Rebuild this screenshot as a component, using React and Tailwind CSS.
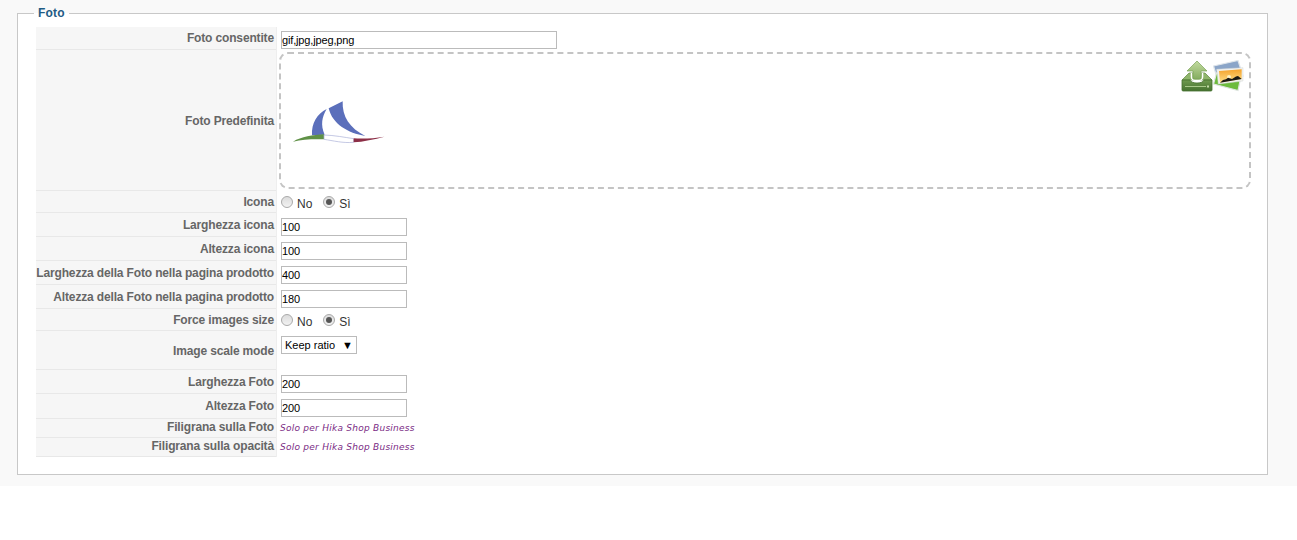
import React from "react";

const labelBase = "w-[240px] shrink-0 bg-[#f6f6f6] border-b border-[#e8e8e8] text-right pr-[2px] font-bold text-[12px] leading-[14px] tracking-[-0.15px] whitespace-nowrap text-[#666666]";

function Row({ label, h, children, center, pt = "pt-[5px]", fieldPt = "" }) {
  return (
    <div className="flex" style={{ height: h }}>
      <div className={`${labelBase} ${center ? "flex items-center justify-end pt-[2px]" : pt}`}>{label}</div>
      <div className={`flex-1 min-w-0 border-l border-[#eeeeee] ${fieldPt}`}>{children}</div>
    </div>
  );
}

function TextBox({ value, wide }) {
  return (
    <input
      readOnly
      value={value}
      className={`ml-[4px] block h-[18px] ${wide ? "w-[276px]" : "w-[126px]"} border border-[#bbbbbb] bg-white text-[11px] leading-[14px] tracking-[-0.15px] text-black outline-none`}
    />
  );
}

function Radio({ checked }) {
  return (
    <span className="flex h-[12px] w-[12px] items-center justify-center rounded-full border border-[#a9a9a9] bg-gradient-to-b from-[#dcdcdc] to-[#f2f2f2]">
      {checked && <span className="h-[6px] w-[6px] rounded-full bg-[#555555]" />}
    </span>
  );
}

function YesNo() {
  return (
    <div className="ml-[4px] flex h-full items-start pt-[5px] text-[12px] leading-[14px] text-[#333333]">
      <Radio />
      <span className="ml-[4px] mt-[1px]">No</span>
      <span className="ml-[11px]"><Radio checked /></span>
      <span className="ml-[4px] mt-[1px]">Sì</span>
    </div>
  );
}

function Locked() {
  return (
    <div className="ml-[3px] pt-[2px] text-[9px] italic leading-[14px] tracking-[0.25px] whitespace-nowrap text-[#7b2c85] [font-family:'DejaVu_Sans',sans-serif]">
      Solo per Hika Shop Business
    </div>
  );
}

function Logo() {
  return (
    <svg width="92" height="45" viewBox="40 30 276 135" className="block">
      <path d="M141 57 C112 72 95 100 97 136 L135 134 C122 105 127 80 141 57 Z" fill="#5b6fbb" />
      <path d="M147 55 L189 34 C187 80 210 115 257 138 C205 130 158 102 147 55 Z" fill="#5b6fbb" />
      <path d="M40 155 C65 140 100 135 133 133 L133 148 C100 147 70 148 40 155 Z" fill="#5f9146" />
      <path d="M133 135 C165 136 195 142 222 146 L222 157 C190 160 160 152 133 148 Z" fill="#ffffff" stroke="#a8aed6" strokeWidth="2" />
      <path d="M222 145 C250 147 285 145 314 140 C285 148 250 155 222 157 Z" fill="#8c2f47" />
    </svg>
  );
}

function UploadIcon() {
  return (
    <svg width="32" height="32" viewBox="0 0 32 32" className="block">
      <defs>
        <linearGradient id="arrowFill" x1="0" y1="0" x2="0" y2="1">
          <stop offset="0" stopColor="#c3dba0" />
          <stop offset="1" stopColor="#85ad60" />
        </linearGradient>
        <linearGradient id="trayFill" x1="0" y1="0" x2="0" y2="1">
          <stop offset="0" stopColor="#6f9a4e" />
          <stop offset="1" stopColor="#467230" />
        </linearGradient>
      </defs>
      <path d="M1 20 L8 13 H24 L31 20 Z" fill="#8fb56b" stroke="#5e8740" strokeWidth="0.7" />
      <path d="M1 20 H9 C10 24 22 24 23 20 H31 V30 Q31 31 30 31 H2 Q1 31 1 30 Z" fill="url(#trayFill)" stroke="#44702d" strokeWidth="0.8" />
      <path d="M4 26.5 H25" stroke="#a9c98a" strokeWidth="1" />
      <rect x="26" y="25.5" width="2" height="2" fill="#c5dcaa" />
      <path d="M10.5 13 V17 C10.5 21.5 21.5 21.5 21.5 17 V13" fill="none" stroke="#ffffff" strokeWidth="1.6" />
      <path d="M16 1 L26 11 H20 V19 H12 V11 H6 Z" fill="url(#arrowFill)" stroke="#7aa456" strokeWidth="0.7" />
    </svg>
  );
}

function PhotosIcon() {
  return (
    <svg width="31" height="32" viewBox="0 -1 31 32" className="block">
      <defs>
        <linearGradient id="skyFill" x1="0" y1="0" x2="0" y2="1">
          <stop offset="0" stopColor="#f5a32c" />
          <stop offset="1" stopColor="#fde08a" />
        </linearGradient>
      </defs>
      <polygon points="0.5,5 25,-0.5 30,15 5,20" fill="#8ba5c8" stroke="#dfe5ea" strokeWidth="1.2" />
      <polygon points="3.7,11.7 27,20 25,29.5 0.5,23" fill="#6dbb3d" stroke="#dfe5e0" strokeWidth="1.2" />
      <polygon points="3.7,8.3 30,6.7 30,20 5.3,23" fill="#f2f2ee" stroke="#d4d8d8" strokeWidth="0.5" />
      <polygon points="6,10 28.7,8.3 28.7,18 7,21.7" fill="url(#skyFill)" />
      <circle cx="16" cy="16" r="2" fill="#fff3c4" />
      <polygon points="7,21.7 10,19 13,18.2 15,16.8 19,18 23,15.5 25,15 28.7,18" fill="#1c1a14" />
    </svg>
  );
}

export default function App() {
  return (
    <div className="h-[540px] bg-white [font-family:'Liberation_Sans',Arial,sans-serif]">
      <div className="h-[486px] bg-[#f9f9f9] px-[17px] pt-[6px]">
        <fieldset className="h-[469px] w-[1250px] border border-[#c8c8c8] bg-white pl-[18px] pr-[16px]">
          <legend className="ml-[-2px] px-[4px] text-[12px] font-bold leading-[14px] tracking-[0.2px] text-[#1f5c85]">Foto</legend>
          <div className="mt-[7px]">
            <Row label="Foto consentite" h={23} pt="pt-[4px]" fieldPt="pt-[4px]">
              <TextBox value="gif,jpg,jpeg,png" wide />
            </Row>
            <Row label="Foto Predefinita" h={141} center fieldPt="pt-[2px]">
              <div className="relative ml-[2px] h-[137px] w-[972px] rounded-[9px] border-2 border-dashed border-[#c4c4c4] bg-white">
                <div className="pl-[12px] pt-[46px]"><Logo /></div>
                <div className="absolute right-[5px] top-[6px] flex">
                  <UploadIcon />
                  <PhotosIcon />
                </div>
              </div>
            </Row>
            <Row label="Icona" h={22} pt="pt-[4px]"><YesNo /></Row>
            <Row label="Larghezza icona" h={24} fieldPt="pt-[5px]"><TextBox value="100" /></Row>
            <Row label="Altezza icona" h={24} fieldPt="pt-[5px]"><TextBox value="100" /></Row>
            <Row label="Larghezza della Foto nella pagina prodotto" h={24} fieldPt="pt-[5px]"><TextBox value="400" /></Row>
            <Row label="Altezza della Foto nella pagina prodotto" h={24} fieldPt="pt-[5px]"><TextBox value="180" /></Row>
            <Row label="Force images size" h={22} pt="pt-[4px]"><YesNo /></Row>
            <Row label="Image scale mode" h={39} center fieldPt="pt-[5px]">
              <div className="relative ml-[4px] h-[18px] w-[76px]">
                <select
                  defaultValue="Keep ratio"
                  className="block h-[18px] w-[76px] appearance-none rounded-none border border-[#bbbbbb] bg-white pl-[3px] text-[11px] leading-[14px] text-black outline-none"
                >
                  <option>Keep ratio</option>
                </select>
                <span className="pointer-events-none absolute right-[4px] top-[2px] text-[11px] leading-[14px] text-black">▼</span>
              </div>
            </Row>
            <Row label="Larghezza Foto" h={24} fieldPt="pt-[5px]"><TextBox value="200" /></Row>
            <Row label="Altezza Foto" h={25} fieldPt="pt-[5px]"><TextBox value="200" /></Row>
            <Row label="Filigrana sulla Foto" h={19} pt="pt-[1px]"><Locked /></Row>
            <Row label="Filigrana sulla opacità" h={19} pt="pt-[1px]"><Locked /></Row>
          </div>
        </fieldset>
      </div>
    </div>
  );
}
